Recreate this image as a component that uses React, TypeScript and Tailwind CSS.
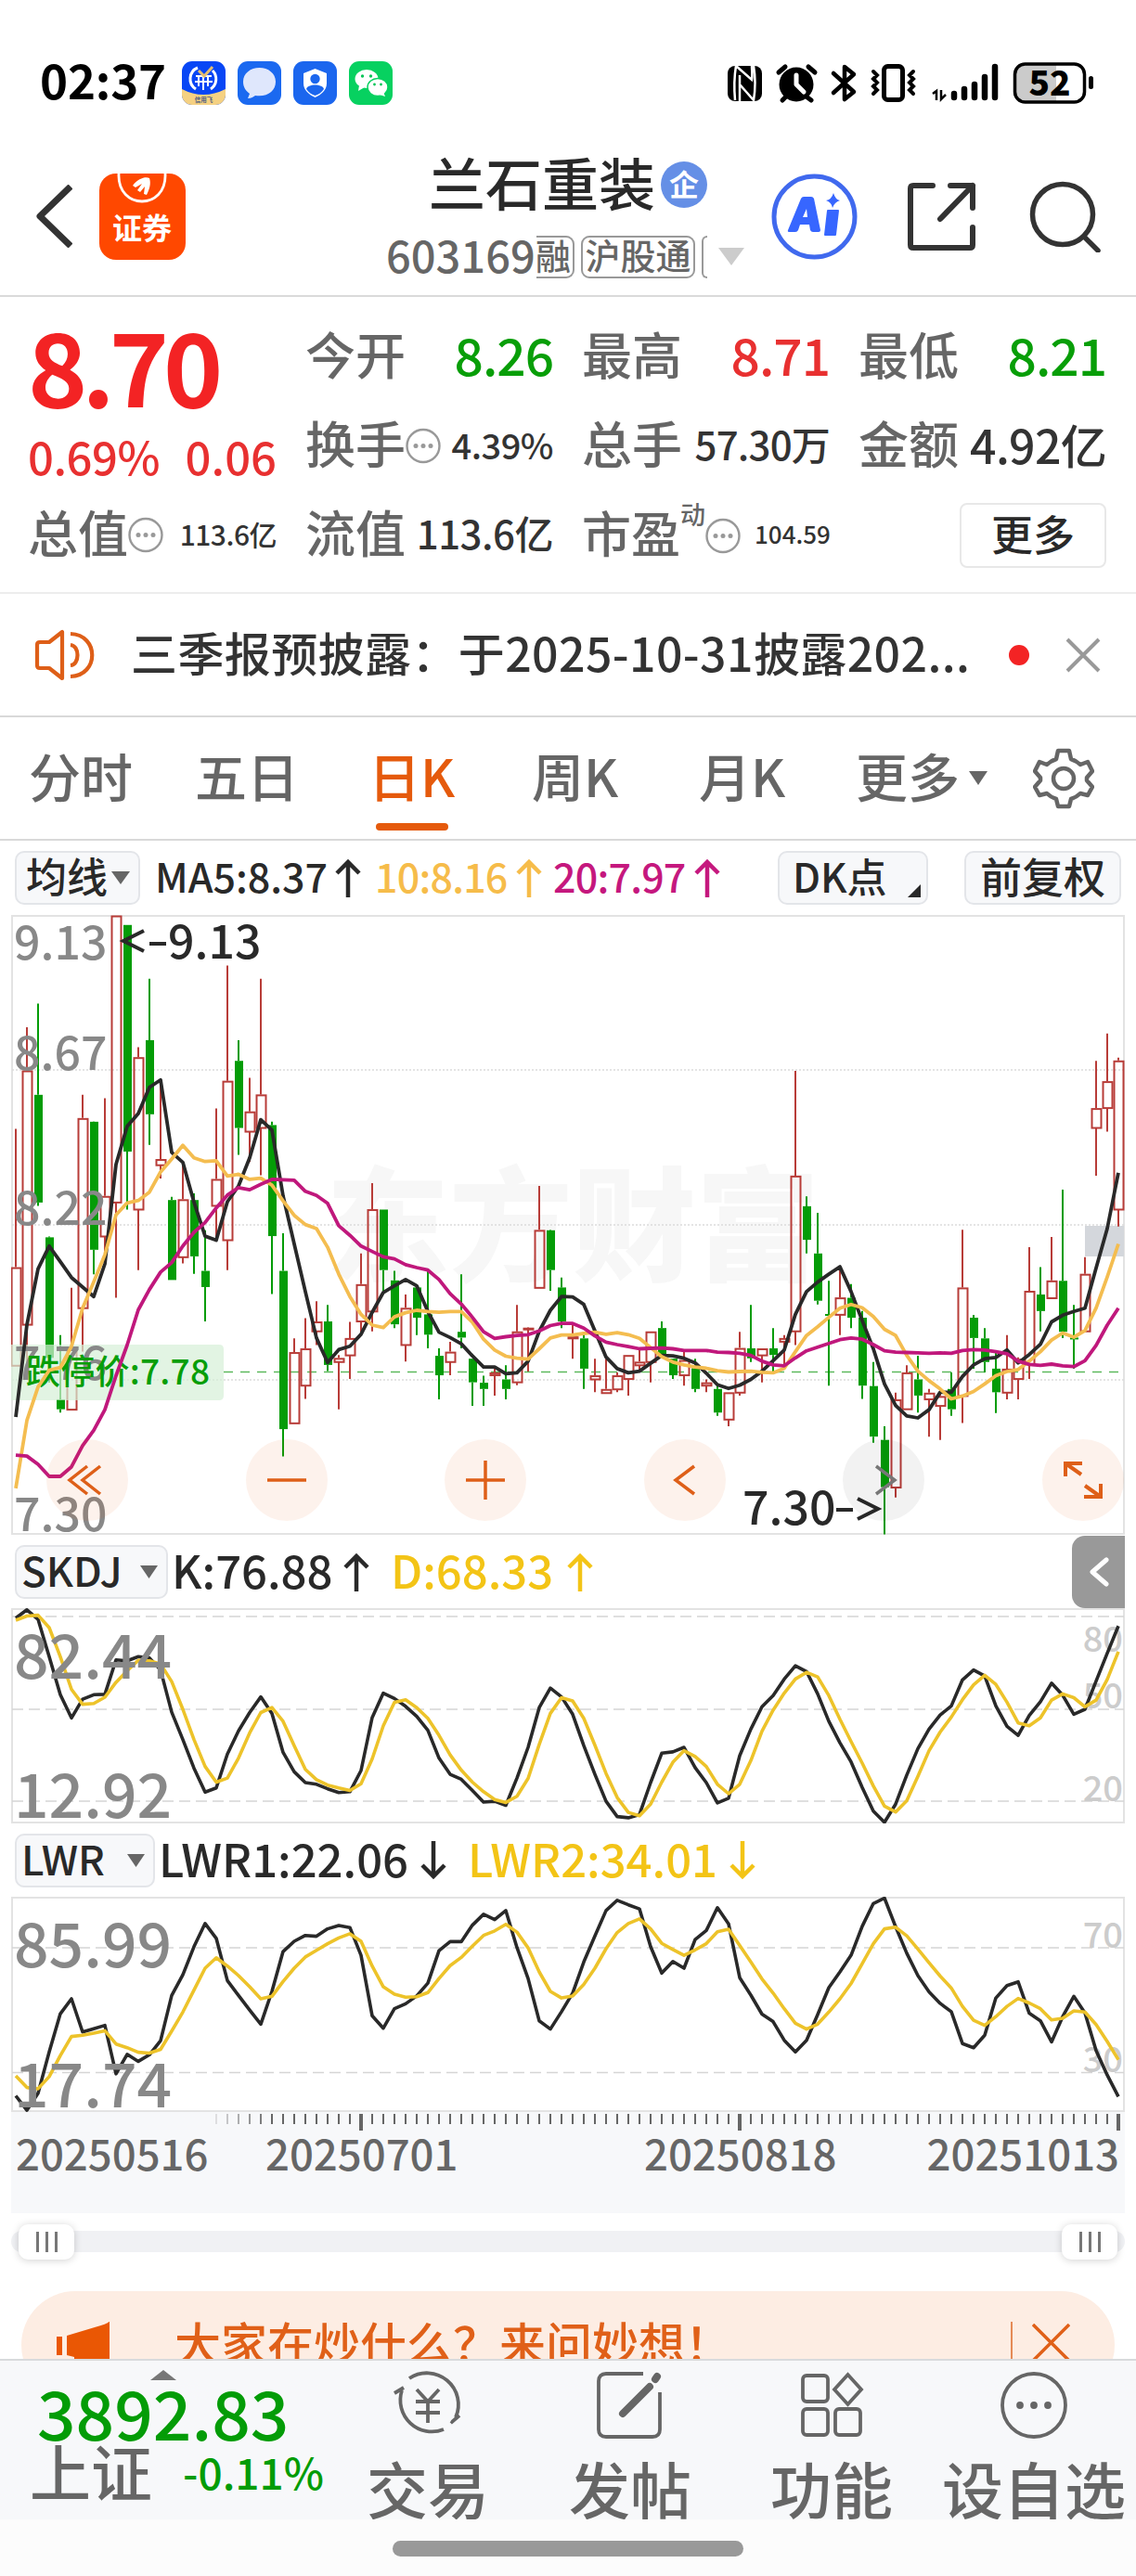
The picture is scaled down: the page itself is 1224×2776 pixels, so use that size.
import React, { Fragment } from "react";

// [up(1)/down(0), high, body top, body bottom, low] in chart units, 2.24 units per pixel
const candles = [
  [1, 552, 886, 1124, 1124], [1, 307, 411, 1025, 1118], [0, 250, 470, 730, 738], [0, 812, 814, 1105, 1165],
  [0, 1050, 1205, 1229, 1237], [1, 936, 1080, 1230, 1230], [1, 470, 526, 985, 1090], [0, 534, 535, 844, 903],
  [1, 478, 714, 812, 880], [1, 37, 37, 730, 960], [0, 60, 60, 607, 747], [1, 355, 379, 747, 893],
  [0, 190, 338, 517, 591], [1, 437, 625, 640, 672], [0, 716, 724, 917, 917], [1, 632, 722, 862, 877],
  [0, 708, 724, 860, 902], [0, 797, 895, 934, 1017], [1, 503, 673, 738, 820], [1, 158, 436, 821, 893],
  [0, 338, 388, 550, 615], [1, 429, 510, 559, 632], [1, 190, 469, 550, 664], [0, 535, 543, 811, 951],
  [0, 804, 895, 1277, 1343], [1, 1058, 1091, 1263, 1263], [1, 1009, 1082, 1172, 1204], [1, 968, 1017, 1041, 1074],
  [0, 977, 1017, 1122, 1137], [1, 1098, 1105, 1115, 1229], [1, 1018, 1057, 1099, 1156], [1, 853, 927, 1017, 1050],
  [1, 683, 746, 993, 1041], [0, 747, 747, 893, 943], [0, 895, 918, 1024, 1033], [1, 952, 984, 1074, 1114],
  [0, 935, 935, 1008, 1050], [0, 894, 1000, 1049, 1082], [0, 1082, 1100, 1147, 1205], [1, 1066, 1090, 1115, 1147],
  [0, 903, 1042, 1056, 1082], [0, 1107, 1107, 1164, 1221], [0, 1148, 1165, 1180, 1221], [1, 1130, 1140, 1147, 1196],
  [0, 1123, 1157, 1180, 1205], [1, 977, 1041, 1164, 1171], [1, 1031, 1032, 1034, 1138], [1, 690, 796, 936, 936],
  [0, 796, 797, 893, 943], [0, 911, 935, 1017, 1033], [1, 1023, 1053, 1058, 1107], [0, 1050, 1058, 1131, 1180],
  [1, 1107, 1147, 1157, 1188], [1, 1107, 1180, 1190, 1190], [1, 1140, 1147, 1181, 1188], [1, 1098, 1098, 1156, 1196],
  [1, 1085, 1114, 1123, 1135], [1, 1041, 1041, 1115, 1164], [0, 1017, 1033, 1100, 1100], [0, 1107, 1107, 1147, 1156],
  [1, 1090, 1110, 1147, 1172], [0, 1107, 1130, 1180, 1188], [1, 1157, 1164, 1172, 1188], [0, 1172, 1180, 1237, 1245],
  [1, 1188, 1188, 1254, 1270], [1, 1042, 1081, 1189, 1196], [0, 977, 1082, 1106, 1115], [1, 1082, 1082, 1099, 1164],
  [0, 1033, 1082, 1098, 1140], [1, 1050, 1057, 1066, 1130], [1, 412, 665, 1041, 1074], [0, 715, 739, 820, 853],
  [0, 755, 853, 967, 976], [0, 919, 999, 1001, 1172], [1, 886, 959, 1001, 1050], [0, 927, 960, 1008, 1033],
  [0, 992, 1008, 1172, 1204], [0, 1115, 1173, 1295, 1310], [0, 1270, 1303, 1417, 1531], [1, 1189, 1205, 1418, 1442],
  [1, 1123, 1140, 1229, 1229], [0, 1100, 1157, 1196, 1237], [1, 1180, 1189, 1205, 1295], [1, 1180, 1197, 1221, 1303],
  [0, 1140, 1180, 1229, 1245], [1, 796, 935, 1197, 1262], [0, 1001, 1008, 1057, 1131], [0, 1033, 1058, 1115, 1140],
  [0, 1090, 1131, 1188, 1238], [1, 1050, 1131, 1189, 1205], [1, 1104, 1107, 1156, 1205], [1, 838, 943, 1120, 1156],
  [0, 886, 952, 992, 1041], [1, 813, 918, 961, 961], [0, 699, 919, 1042, 1057], [0, 977, 1056, 1060, 1131],
  [1, 862, 902, 1041, 1041], [1, 388, 502, 550, 665], [1, 322, 437, 502, 559], [1, 380, 387, 747, 788],
];

const ma5 = [
  1248, 1025, 890, 835, 873, 911, 934, 957, 878, 638, 546, 515, 452, 434, 609, 633, 729, 811, 821, 728, 690, 622, 530, 555, 714,
  830, 945, 1057, 1116, 1085, 1077, 1048, 995, 947, 931, 916, 931, 993, 1043, 1056, 1071, 1100, 1127, 1127, 1143, 1141, 1113,
  1041, 990, 957, 958, 976, 1040, 1103, 1131, 1141, 1137, 1118, 1099, 1100, 1106, 1117, 1142, 1170, 1179, 1171, 1157, 1137,
  1112, 1086, 1000, 945, 922, 903, 885, 945, 1015, 1083, 1168, 1220, 1245, 1250, 1230, 1188, 1188, 1150, 1122, 1107, 1104,
  1086, 1117, 1097, 1072, 1018, 1002, 993, 985, 888, 793, 658,
];
const ma10 = [
  1420, 1256, 1175, 1135, 1128, 1077, 985, 922, 856, 760, 731, 725, 705, 656, 625, 592, 622, 631, 629, 666, 662, 674, 671, 688,
  726, 761, 783, 793, 838, 903, 957, 1000, 1026, 1032, 1006, 996, 990, 993, 995, 993, 993, 1019, 1060, 1086, 1101, 1106, 1108,
  1083, 1057, 1050, 1050, 1046, 1043, 1048, 1044, 1049, 1058, 1080, 1102, 1115, 1122, 1127, 1130, 1136, 1139, 1138, 1137, 1140,
  1141, 1130, 1090, 1051, 1030, 1007, 985, 976, 984, 1005, 1036, 1051, 1099, 1137, 1160, 1180, 1204, 1197, 1186, 1168, 1148,
  1138, 1133, 1113, 1090, 1062, 1045, 1055, 1039, 985, 910, 830,
];
const ma20 = [
  1340, 1342, 1362, 1391, 1391, 1368, 1317, 1280, 1230, 1148, 1074, 989, 940, 898, 875, 835, 802, 778, 743, 712, 694, 699, 686,
  674, 675, 676, 703, 713, 732, 786, 809, 835, 848, 861, 866, 880, 887, 893, 916, 950, 975, 1007, 1042, 1058, 1054, 1051, 1049,
  1040, 1027, 1022, 1022, 1033, 1052, 1067, 1073, 1078, 1083, 1082, 1081, 1083, 1087, 1087, 1087, 1091, 1092, 1094, 1099, 1113,
  1122, 1124, 1105, 1088, 1079, 1070, 1061, 1057, 1060, 1073, 1088, 1091, 1092, 1093, 1094, 1093, 1094, 1087, 1085, 1086, 1090,
  1095, 1113, 1121, 1123, 1120, 1124, 1126, 1112, 1075, 1026, 985,
];
const skdjK = [
  210, 190, 213, 303, 395, 451, 406, 395, 394, 311, 313, 303, 306, 335, 437, 503, 572, 630, 620, 538, 482, 438, 400, 440, 534,
  581, 607, 611, 622, 631, 629, 578, 450, 391, 404, 423, 447, 481, 548, 587, 599, 626, 654, 652, 662, 596, 522, 426, 379, 400,
  442, 518, 587, 652, 689, 692, 684, 607, 536, 533, 522, 571, 607, 656, 645, 542, 478, 424, 397, 357, 325, 339, 393, 459, 511,
  557, 619, 676, 703, 659, 589, 525, 478, 444, 422, 359, 335, 350, 422, 471, 493, 445, 412, 367, 396, 442, 430, 362, 295, 229,
];
const skdjD = [
  215, 205, 203, 233, 303, 382, 418, 416, 401, 365, 337, 312, 313, 321, 363, 430, 503, 568, 606, 596, 548, 487, 438, 426, 459,
  518, 575, 600, 613, 620, 626, 610, 550, 470, 413, 407, 426, 452, 493, 540, 577, 606, 629, 648, 655, 640, 597, 515, 440, 402,
  410, 452, 517, 585, 643, 679, 687, 659, 606, 558, 530, 544, 568, 611, 634, 611, 554, 483, 432, 391, 357, 341, 352, 397, 454,
  508, 560, 615, 664, 678, 651, 592, 530, 485, 449, 407, 371, 348, 370, 413, 463, 470, 451, 408, 393, 402, 424, 408, 358, 291,
];
const lwr1 = [
  1363, 1398, 1357, 1257, 1165, 1129, 1209, 1201, 1193, 1310, 1263, 1280, 1264, 1230, 1121, 1071, 1003, 947, 983, 1085, 1121,
  1156, 1190, 1111, 1015, 990, 976, 978, 960, 952, 957, 1024, 1170, 1200, 1153, 1141, 1122, 1091, 1013, 991, 991, 951, 925, 938,
  916, 1005, 1080, 1182, 1202, 1160, 1115, 1040, 977, 916, 891, 902, 912, 1003, 1067, 1039, 1055, 986, 964, 909, 948, 1078,
  1120, 1166, 1184, 1229, 1257, 1229, 1167, 1102, 1064, 1024, 954, 899, 886, 955, 1019, 1073, 1112, 1140, 1160, 1237, 1247,
  1217, 1127, 1097, 1088, 1164, 1182, 1233, 1172, 1123, 1163, 1254, 1313, 1365,
];
const lwr2 = [
  1315, 1343, 1346, 1317, 1266, 1220, 1217, 1212, 1206, 1238, 1247, 1258, 1260, 1251, 1207, 1161, 1108, 1055, 1030, 1050, 1073,
  1100, 1129, 1123, 1087, 1055, 1028, 1012, 996, 982, 972, 990, 1050, 1100, 1118, 1125, 1124, 1114, 1080, 1049, 1029, 1002, 976,
  965, 949, 968, 1006, 1064, 1111, 1127, 1122, 1094, 1055, 1008, 969, 947, 936, 960, 995, 1010, 1024, 1011, 996, 967, 961, 1000,
  1040, 1081, 1115, 1153, 1188, 1202, 1190, 1161, 1129, 1092, 1044, 996, 960, 956, 977, 1009, 1042, 1074, 1103, 1147, 1181,
  1193, 1172, 1147, 1128, 1139, 1153, 1180, 1176, 1158, 1161, 1191, 1232, 1276,
];

const UNIT = 2.24;
const xAt = (i: number) => 5 + i * 12;
const line = (values: number[], offset: number) =>
  values.map((v, i) => `${xAt(i)},${(v / UNIT - offset).toFixed(1)}`).join(" ");

type TxtProps = { className?: string; children: React.ReactNode };

// pb lifts the glyphs to the optical centre of the line
const Txt = ({ className = "", children }: TxtProps) => (
  <span className={`block whitespace-nowrap leading-none pb-[0.13em] ${className}`}>{children}</span>
);

const Arrow = ({ className = "", down = false }: { className?: string; down?: boolean }) => (
  <svg className={className} width="28" height="42" viewBox="0 0 28 42" fill="none" stroke="currentColor" strokeWidth="4.500">
    {down ? <path d="M14 0V38M2 26L14 38L26 26" /> : <path d="M14 42V4M2 16L14 4L26 16" />}
  </svg>
);

const Triangle = ({ className = "" }: { className?: string }) => (
  <svg className={className} viewBox="0 0 20 15" preserveAspectRatio="none" fill="currentColor">
    <path d="M0 0H20L10 15Z" />
  </svg>
);

const Dots = ({ className = "" }: { className?: string }) => (
  <svg className={`shrink-0 ${className}`} width="38" height="39" viewBox="0 0 38 39" fill="#999">
    <circle cx="19" cy="19.5" r="17.5" fill="none" stroke="#999" strokeWidth="2.4" />
    <circle cx="11" cy="19.5" r="2.5" />
    <circle cx="19" cy="19.5" r="2.5" />
    <circle cx="27" cy="19.5" r="2.5" />
  </svg>
);

const StatusBar = () => (
  <div className="flex h-[136px] items-center pl-[43px] pr-[46px] pt-[42px] text-black">
    <Txt className="w-[153px] text-[51px] font-bold tracking-[-0.2px]">02:37</Txt>
    <div className="flex gap-[13px]">
      <svg width="47" height="47" viewBox="0 0 47 47">
        <clipPath id="app"><rect width="47" height="47" rx="11" /></clipPath>
        <g clipPath="url(#app)">
          <rect width="47" height="47" fill="#0846f5" />
          <path d="M0 30Q23 42 47 30V47H0Z" fill="#f5d182" />
          <path d="M15 30A13 13 0 0 1 17 7M31 30A13 13 0 0 0 33 10" fill="none" stroke="#fff" strokeWidth="3" />
          <path d="M15 16H32M14 22H33M23 14V31M18 17V27M28 17V27" stroke="#fff" strokeWidth="2" />
          <path d="M18 10L24 16L33 6" fill="none" stroke="#e3bd72" strokeWidth="3" />
        </g>
        <text x="23.5" y="44" fontSize="6.5" fontWeight="700" textAnchor="middle" fill="#4f5d80">信用飞</text>
      </svg>
      <svg width="47" height="47" viewBox="0 0 47 47">
        <rect width="47" height="47" rx="11" fill="#1b69f0" />
        <path d="M23.500 7C14 7 6 13 6 22C6 28 9 32 13 35L11 40C15 40 17 38 19 37C32 39 41 32 41 22C41 13 33 7 23.500 7Z" fill="#dfe7fc" />
      </svg>
      <svg width="47" height="47" viewBox="0 0 47 47">
        <rect width="47" height="47" rx="11" fill="#1b66ee" />
        <path d="M23.500 8L36 13V24C36 31 30 36 23.500 39C17 36 11 31 11 24V13Z" fill="#fff" />
        <circle cx="23.500" cy="19" r="5.200" fill="#1b66ee" />
        <path d="M14 30C15 24 32 24 33 30C30 34 27 36 23.500 37C20 36 17 34 14 30Z" fill="#1b66ee" />
      </svg>
      <svg width="47" height="47" viewBox="0 0 47 47">
        <rect width="47" height="47" rx="11" fill="#07d160" />
        <ellipse cx="19" cy="19" rx="12.500" ry="10" fill="#fff" />
        <path d="M11 26L10 32L17 28Z" fill="#fff" />
        <ellipse cx="31" cy="28" rx="11" ry="9.500" fill="#fff" stroke="#07d160" strokeWidth="1.500" />
        <path d="M33 36L39 38L37 33Z" fill="#fff" />
        <g fill="#07c558">
          <circle cx="14.500" cy="16" r="1.700" /><circle cx="23.500" cy="16" r="1.700" />
          <circle cx="27.500" cy="25" r="1.400" /><circle cx="34.500" cy="25" r="1.400" />
        </g>
      </svg>
    </div>
    <svg className="ml-auto" width="394" height="45" viewBox="0 0 394 45">
      <rect x="0" y="4" width="37" height="38" rx="8" />
      <path d="M8 41C7 30 7 16 9 4L26 19C27 14 26 9 26 4M13 14V42M13 24L28 41C30 29 30 16 28 4" fill="none" stroke="#fff" strokeWidth="2.500" />
      <circle cx="74" cy="24" r="18.500" />
      <path d="M62 38L59 41M86 38L90 41M55 11L62 5M87 5L94 11" stroke="#000" strokeWidth="5" strokeLinecap="round" />
      <path d="M74 14V24L82 32" fill="none" stroke="#fff" strokeWidth="5" strokeLinecap="round" strokeLinejoin="round" />
      <path d="M114 12L136 32L126 40V5L136 13L114 33" fill="none" stroke="#000" strokeWidth="4.500" strokeLinecap="round" strokeLinejoin="round" />
      <rect x="168.500" y="4.500" width="20" height="36" rx="4" fill="none" stroke="#000" strokeWidth="5" />
      <path d="M157 10L161 14L157 18L161 22L157 26L161 30L157 34M200 10L196 14L200 18L196 22L200 26L196 30L200 34" fill="none" stroke="#000" strokeWidth="4" strokeLinecap="round" />
      <path d="M221 34L225 31V41M230 30V40L235 35" fill="none" stroke="#000" strokeWidth="2.500" />
      <path d="M244 34V38M255 29V38M266 24V38M277 16V38M288 5V38" stroke="#000" strokeWidth="6.500" strokeLinecap="round" />
      <path d="M319 3H354V42H319Q310 42 310 32V13Q310 3 319 3Z" fill="#cbcbcb" />
      <rect x="309.500" y="2" width="75" height="41" rx="11" fill="none" stroke="#000" strokeWidth="3.500" />
      <rect x="389" y="15" width="5" height="14" rx="2.500" />
      <text x="347" y="36" fontSize="37" fontWeight="900" textAnchor="middle">52</text>
    </svg>
  </div>
);

const Header = () => (
  <div className="flex h-[184px] items-center border-b-2 border-[#dadada] pl-[38px] pt-[12px]">
    <svg width="40" height="68" viewBox="0 0 40 68" fill="none" stroke="#333" strokeWidth="7" strokeLinejoin="round">
      <path d="M38 2L5 34L38 66" />
    </svg>
    <svg className="ml-[29px]" width="93" height="93" viewBox="0 0 93 93">
      <rect width="93" height="93" rx="18" fill="#ff4800" />
      <path d="M21 0C19 40 73 40 71 0" fill="none" stroke="#fff" strokeWidth="2.800" />
      <path d="M36 13C42 5 50 3 54 5C56 11 54 17 51 23L48 22L49 14L44 20L41 18L46 11L39 15Z" fill="#fff" />
      <text x="46" y="71" fontSize="32" fontWeight="700" textAnchor="middle" fill="#fff">证券</text>
    </svg>
    <div className="ml-[216px] h-[136px] w-[400px] shrink-0">
      <div className="flex items-center pl-[46px]">
        <Txt className="text-[61px] text-[#292929]">兰石重装</Txt>
        <div className="ml-[6px] flex h-[50px] w-[50px] items-center justify-center rounded-full bg-[#658fe6]">
          <Txt className="text-[32px] font-bold text-white">企</Txt>
        </div>
      </div>
      <div className="mt-[19px] flex h-[48px] items-center text-[#666]">
        <Txt className="w-[162px] text-[47px] text-[#666]">603169</Txt>
        <div className="flex h-[46px] w-[41px] items-center justify-end rounded-r-[9px] border-2 border-l-0 border-[#999]">
          <Txt className="text-[38px] mr-[2px]">融</Txt>
        </div>
        <div className="ml-[7px] flex h-[46px] w-[123px] items-center justify-center rounded-[9px] border-2 border-[#999]">
          <Txt className="text-[38px]">沪股通</Txt>
        </div>
        <div className="ml-[7px] h-[46px] w-[6px] rounded-l-[9px] border-2 border-r-0 border-[#999]" />
        <Triangle className="ml-[12px] h-[19px] w-[28px] text-[#ccc]" />
      </div>
    </div>
    <svg className="ml-[15px]" width="93" height="93" viewBox="0 0 93 93">
      <circle cx="46.500" cy="46.500" r="43.500" fill="none" stroke="#4069ee" strokeWidth="5" />
      <path d="M18 61L32 27Q33 25 35 25H43Q45 25 46 27L53 61Q53 63 51 63H45Q43 63 42 61L41 55H31L29 61Q28 63 26 63H20Q17 63 18 61ZM34 47H39L38 38Z" fill="#3766ff" />
      <path d="M61 40H72L69 66H58Z" fill="#3766ff" stroke="#3766ff" strokeWidth="2" strokeLinejoin="round" />
      <path d="M67 21Q69 28 74 29Q68 31 66 37Q65 31 59 29Q65 28 67 21Z" fill="#3766ff" />
    </svg>
    <svg className="ml-[53px]" width="75" height="75" viewBox="0 0 75 75" fill="none" stroke="#333" strokeWidth="6" strokeLinecap="round" strokeLinejoin="round">
      <path d="M28 4H7Q4 4 4 7V68Q4 71 7 71H68Q71 71 71 68V49M47 4H71V28M71 4L36 40" />
    </svg>
    <svg className="ml-[55px]" width="80" height="77" viewBox="0 0 80 77" fill="none" stroke="#333" strokeWidth="5.500" strokeLinecap="round">
      <circle cx="38" cy="36" r="32.500" />
      <path d="M61 60L76 75" />
    </svg>
  </div>
);

type CellProps = { label: string; value: string; size: string; color?: string; dots?: boolean };

const Cell = ({ label, value, size, color = "text-[#333]", dots }: CellProps) => (
  <div className="flex h-[96px] items-center justify-between">
    <div className="flex items-center">
      <Txt className="text-[54px] text-[#666]">{label}</Txt>
      {dots && <Dots />}
    </div>
    <Txt className={`${size} ${color}`}>{value}</Txt>
  </div>
);

const Quote = () => (
  <div className="h-[320px] border-b-2 border-[#ededed] px-[30px] pt-[17px]">
    <div className="grid grid-cols-[268px_267px_267px_267px] grid-rows-[96px_96px_96px] gap-x-[31px]">
      <div className="row-span-2 flex flex-col">
        <Txt className="text-[109px] font-bold tracking-[-6px] text-[#f32324]">8.70</Txt>
        <div className="mt-[6px] flex justify-between text-[#e83030]">
          <Txt className="text-[49px] tracking-[-0.5px]">0.69%</Txt>
          <Txt className="text-[49px]">0.06</Txt>
        </div>
      </div>
      <Cell label="今开" value="8.26" size="text-[55px] tracking-[-1px]" color="text-[#089e08]" />
      <Cell label="最高" value="8.71" size="text-[55px] tracking-[-1px]" color="text-[#e83030]" />
      <Cell label="最低" value="8.21" size="text-[55px] tracking-[-1px]" color="text-[#089e08]" />
      <Cell label="换手" value="4.39%" size="text-[38px] tracking-[-0.5px]" dots />
      <Cell label="总手" value="57.30万" size="text-[42px] tracking-[-0.8px]" />
      <Cell label="金额" value="4.92亿" size="text-[50px] tracking-[-0.7px]" />
      <Cell label="总值" value="113.6亿" size="text-[30px] tracking-[-0.5px]" dots />
      <Cell label="流值" value="113.6亿" size="text-[42px] tracking-[-0.5px]" />
      <div className="flex h-[96px] items-center">
        <Txt className="text-[53px] text-[#666]">市盈</Txt>
        <Txt className="mb-[44px] text-[27px] text-[#666]">动</Txt>
        <Dots />
        <Txt className="ml-[15px] text-[26px] text-[#333]">104.59</Txt>
      </div>
      <div className="flex h-[96px] items-center justify-end">
        <div className="flex h-[70px] w-[158px] items-center justify-center rounded-[8px] border-2 border-[#e8e8e8]">
          <Txt className="text-[45px] text-[#292929]">更多</Txt>
        </div>
      </div>
    </div>
  </div>
);

const Notice = () => (
  <div className="flex h-[133px] items-center border-b-2 border-[#d9d9d9] pl-[37px]">
    <svg width="66" height="56" viewBox="0 0 66 56" fill="none" stroke="#de5f18" strokeWidth="4.200" strokeLinejoin="round">
      <path d="M30 3V53L16 42H6Q3 42 3 39V17Q3 14 6 14H16Z" />
      <path d="M39 17C49 18 49 38 39 39M39 5C70 6 70 50 39 51" />
    </svg>
    <Txt className="ml-[38px] w-[903px] text-[50px] tracking-[0.4px] text-[#333]">三季报预披露：于2025-10-31披露202...</Txt>
    <div className="ml-[43px] h-[22px] w-[22px] shrink-0 rounded-full bg-[#f32324]" />
    <svg className="ml-[39px]" width="38" height="38" viewBox="0 0 38 38" stroke="#999" strokeWidth="4">
      <path d="M2 2L36 36M36 2L2 36" />
    </svg>
  </div>
);

const Tabs = () => (
  <div className="flex h-[133px] items-center border-b-2 border-[#d9d9d9] pl-[31px] text-[56px] text-[#666]">
    <Txt className="w-[179px]">分时</Txt>
    <Txt className="w-[187px]">五日</Txt>
    <div className="relative w-[176px]">
      <Txt className="text-[#e55a0c]">日K</Txt>
      <div className="absolute left-[8px] top-[80px] h-[8px] w-[78px] rounded-full bg-[#e55a0c]" />
    </div>
    <Txt className="w-[180px]">周K</Txt>
    <Txt className="w-[169px]">月K</Txt>
    <Txt>更多</Txt>
    <Triangle className="ml-[10px] h-[15px] w-[20px]" />
    <svg className="ml-[49px]" width="66" height="66" viewBox="0 0 66 66" fill="none" stroke="#666" strokeWidth="4.500" strokeLinejoin="round">
      <path d="M27 3H39L41 12Q47 14 51 18L59 15L64 25L58 32V35L64 42L59 51L51 49Q47 53 41 55L39 63H27L25 55Q19 53 15 49L7 51L2 42L8 35V32L2 25L7 15L15 18Q19 14 25 12Z" />
      <circle cx="33" cy="33" r="11" />
    </svg>
  </div>
);

const pill = "flex items-center rounded-[10px] border-2 border-[#e3e5e9] bg-[#f7f8fa] text-[#292929]";

const MaRow = () => (
  <div className="flex h-[80px] items-center pl-[16px] pr-[16px]">
    <div className={`${pill} h-[58px] w-[135px] pl-[10px]`}>
      <Txt className="text-[44px]">均线</Txt>
      <Triangle className="ml-[4px] h-[14px] w-[20px] text-[#666]" />
    </div>
    <Txt className="ml-[16px] w-[194px] text-[43px] text-[#292929]">MA5:8.37</Txt>
    <Arrow className="w-[28px] text-[#292929]" />
    <Txt className="ml-[15px] w-[152px] text-[43px] tracking-[-0.8px] text-[#f6bc4a]">10:8.16</Txt>
    <Arrow className="w-[28px] text-[#f6bc4a]" />
    <Txt className="ml-[12px] w-[152px] text-[43px] tracking-[-0.8px] text-[#c5187e]">20:7.97</Txt>
    <Arrow className="w-[28px] text-[#c5187e]" />
    <div className={`${pill} relative ml-auto h-[58px] w-[162px] pl-[14px]`}>
      <Txt className="text-[43px]">DK点</Txt>
      <svg className="absolute bottom-[6px] right-[6px]" width="14" height="14" viewBox="0 0 14 14" fill="#292929">
        <path d="M14 0V14H0Z" />
      </svg>
    </div>
    <div className={`${pill} ml-[39px] h-[58px] w-[169px] justify-center`}>
      <Txt className="text-[45px]">前复权</Txt>
    </div>
  </div>
);

const roundButtons = [
  "M22 3L3 18L22 33M36 3L17 18L36 33",
  "M1 18H43",
  "M1 18H43M22 -3V39",
  "M32 3L12 18L32 33",
  "M14 3L34 18L14 33",
  "",
];

const MainChart = () => (
  <div className="relative mx-3 h-[668px]">
    <svg width="1200" height="668" viewBox="0 0 1200 668">
      <text x="339" y="384" fontSize="133" fontWeight="900" fill="#f7f7f7">东方财富</text>
      <rect x="1" y="1" width="1198" height="666" fill="none" stroke="#e3e3e3" strokeWidth="2" />
      {[167, 334, 501].map((y) => (
        <path key={y} d={`M1 ${y}H1199`} stroke="#dcdcdc" strokeWidth="1.500" strokeDasharray="2 2" />
      ))}
      <rect x="1157" y="335" width="42" height="33" fill="#d4d7dc" />
      <path d="M229 492.500H1199" stroke="#5cb95c" strokeWidth="1.500" strokeDasharray="10 8" />
      {candles.map(([up, high, top, bottom, low], i) => {
        const x = xAt(i);
        const y = (v: number) => v / UNIT - 16;
        const color = up ? "#b83c38" : "#049c07";
        return (
          <g key={i} stroke={color}>
            <path d={`M${x} ${y(high)}V${y(top)}M${x} ${y(bottom)}V${y(low)}`} strokeWidth="2" />
            {up ? (
              <rect x={x - 4.5} y={y(top) + 1} width="10" height={Math.max(y(bottom) - y(top) - 1, 1)} fill="none" strokeWidth="2" />
            ) : (
              <rect x={x - 4} y={y(top)} width="9" height={Math.max(y(bottom) - y(top), 2)} fill={color} stroke="none" />
            )}
          </g>
        );
      })}
      <path d="M0 463H224Q229 463 229 468V518Q229 523 224 523H0Z" fill="#d5f0d7" fillOpacity="0.7" />
      <g fontSize="50" fill="#888">
        <text x="3" y="48">9.13</text>
        <text x="3" y="167">8.67</text>
        <text x="3" y="334">8.22</text>
        <text x="3" y="501">7.76</text>
        <text x="3" y="664">7.30</text>
      </g>
      <text x="16" y="506" fontSize="37" fill="#089e08" textLength="198">跌停价:7.78</text>
      <g fill="none" strokeWidth="3.800" strokeLinejoin="round">
        <polyline points={line(ma5, 16)} stroke="#292929" />
        <polyline points={line(ma10, 16)} stroke="#f4bd50" />
        <polyline points={line(ma20, 16)} stroke="#c0187c" />
      </g>
      <path d="M143 17L121 28L143 39M149 31H167" fill="none" stroke="#292929" strokeWidth="4" />
      <text x="169" y="47" fontSize="50" fill="#292929">9.13</text>
      <text x="788" y="657" fontSize="50" fill="#292929">7.30</text>
      <path d="M889 641H907M912 629L934 640L912 651" fill="none" stroke="#292929" strokeWidth="4" />
    </svg>
    <div className="absolute left-[38px] top-[565px] flex w-[1161px] justify-between">
      {roundButtons.map((d, i) => (
        <div
          key={i}
          className={`flex h-[88px] w-[88px] items-center justify-center rounded-full ${i === 4 ? "bg-black/5" : "bg-[#e8550a]/8"}`}
        >
          <svg width="44" height="42" viewBox="0 -3 44 42" fill="none" stroke={i === 4 ? "#777" : "#de5f18"} strokeWidth="3.500">
            {d ? <path d={d} /> : <path d="M3 14V0H21M3 0L20 12M41 22V36H23M41 36L24 24" strokeWidth="4" />}
          </svg>
        </div>
      ))}
    </div>
  </div>
);

type IndicatorRowProps = { name: string; width: string; first: string; second: string; down?: boolean; firstWidth: string; secondWidth: string };

const IndicatorRow = ({ name, width, first, second, down, firstWidth, secondWidth }: IndicatorRowProps) => (
  <div className="flex h-[79px] items-center pl-[16px] pr-3">
    <div className={`${pill} h-[58px] ${width} justify-between pl-[5px] pr-[9px]`}>
      <Txt className="text-[44px]">{name}</Txt>
      <Triangle className="h-[14px] w-[19px] text-[#666]" />
    </div>
    <Txt className={`ml-[4px] text-[49px] text-[#292929] ${firstWidth}`}>{first}</Txt>
    <Arrow className="text-[#292929]" down={down} />
    <Txt className={`ml-[23px] text-[49px] text-[#f3c416] ${secondWidth}`}>{second}</Txt>
    <Arrow className="text-[#f3c416]" down={down} />
    {!down && (
      <div className="ml-auto flex h-[78px] w-[57px] items-center justify-center rounded-l-[14px] bg-[#999]">
        <svg width="22" height="32" viewBox="0 0 22 32" fill="none" stroke="#fff" strokeWidth="5" strokeLinecap="round" strokeLinejoin="round">
          <path d="M19 3L4 16L19 29" />
        </svg>
      </div>
    )}
  </div>
);

type SubChartProps = {
  offset: number;
  black: number[];
  yellow: number[];
  guides: number[];
  left: [string, number][];
  right: [string, number][];
};

const SubChart = ({ offset, black, yellow, guides, left, right }: SubChartProps) => (
  <svg className="mx-3 block" width="1200" height="232" viewBox="0 0 1200 232">
    <rect x="1" y="1" width="1198" height="230" fill="none" stroke="#e3e3e3" strokeWidth="2" />
    {guides.map((y) => (
      <path key={y} d={`M1 ${y}H1199`} stroke="#d5d5d5" strokeWidth="1.500" strokeDasharray="12 6" />
    ))}
    {right.map(([label, y]) => (
      <text key={label} x="1198" y={y} fontSize="38" textAnchor="end" fill="#ccc">{label}</text>
    ))}
    <g fill="none" strokeWidth="3.600" strokeLinejoin="round">
      <polyline points={line(black, offset)} stroke="#292929" />
      <polyline points={line(yellow, offset)} stroke="#edc32a" />
    </g>
    {left.map(([label, y]) => (
      <text key={label} x="3" y={y} fontSize="66" fill="#888">{label}</text>
    ))}
  </svg>
);

const TimeAxis = () => (
  <div className="mx-3 h-[109px] bg-[#f7f8fa]">
    <svg className="block" width="1200" height="70" viewBox="0 0 1200 70">
      {Array.from({ length: 82 }, (_, k) => k + 18).map((i) => {
        const major = i === 31 || i === 65 || i === 99;
        return (
          <path
            key={i}
            d={`M${xAt(i)} 2V${major ? 20 : 13}`}
            stroke="#666"
            strokeWidth={major ? 4 : 2}
            opacity={Math.min(1, (i - 17) / 6)}
          />
        );
      })}
      <g fontSize="45.500" fill="#666">
        <text x="5" y="63">20250516</text>
        <text x="274" y="63">20250701</text>
        <text x="682" y="63">20250818</text>
        <text x="1194" y="63" textAnchor="end">20251013</text>
      </g>
    </svg>
  </div>
);

const Handle = () => (
  <div className="flex h-[38px] w-[60px] items-center justify-center gap-[7px] rounded-[10px] bg-white shadow-[0_1px_8px_rgba(0,0,0,0.18)]">
    <div className="h-[22px] w-[3px] bg-[#777]" />
    <div className="h-[22px] w-[3px] bg-[#777]" />
    <div className="h-[22px] w-[3px] bg-[#777]" />
  </div>
);

const RangeSlider = () => (
  <div className="mx-3 mt-[19px] flex h-[23px] items-center justify-between rounded-full bg-[#f0f1f4] px-[8px]">
    <Handle />
    <Handle />
  </div>
);

const Banner = () => (
  <div className="mt-[42px] h-[73px] overflow-hidden px-[23px]">
    <div className="flex h-[116px] rounded-full bg-[#fdede3] pl-[37px] pt-[33px] text-[#e06018]">
      <svg width="60" height="62" viewBox="0 0 60 62" fill="#ea5704">
        <path d="M1 16H7V36H1ZM12 15L42 6Q58 2 58 -1V62H20V38L12 36Z" />
      </svg>
      <Txt className="-mt-[4px] ml-[68px] h-[60px] w-[901px] text-[50px]">大家在炒什么？来问妙想！</Txt>
      <div className="h-[60px] w-[2px] bg-[#e58a56]" />
      <svg className="ml-[21px] mt-[2px]" width="41" height="41" viewBox="0 0 41 41" stroke="#e06018" strokeWidth="3.500">
        <path d="M1 1L40 40M40 1L1 40" />
      </svg>
    </div>
  </div>
);

const navItems = [
  {
    label: "交易",
    width: "w-[218px]",
    icon: (
      <Fragment>
        <path d="M19 10A34 34 0 0 1 69 52M64 56L65 57L73 50M56 65A34 34 0 0 1 11 23M3 26L13 20" />
        <path d="M27 22L39 35L51 22M26 35H52M26 47H52M39 35V58" />
      </Fragment>
    ),
  },
  {
    label: "发帖",
    width: "w-[218px]",
    icon: (
      <Fragment>
        <path d="M53 5H13Q5 5 5 13V65Q5 73 13 73H63Q71 73 71 65V25" />
        <path d="M66 11L68 8M60 19L31 48" strokeWidth="8" strokeLinecap="round" />
      </Fragment>
    ),
  },
  {
    label: "功能",
    width: "w-[216px]",
    icon: (
      <Fragment>
        <rect x="8" y="7" width="27" height="28" rx="4" />
        <rect x="8" y="43" width="27" height="28" rx="4" />
        <rect x="43" y="43" width="27" height="28" rx="4" />
        <path d="M56.500 6L71 22L56.500 38L42 22Z" />
      </Fragment>
    ),
  },
  {
    label: "设自选",
    width: "w-[220px]",
    icon: (
      <Fragment>
        <circle cx="39" cy="39" r="34" />
        <circle cx="24" cy="39" r="2" />
        <circle cx="39" cy="39" r="2" />
        <circle cx="54" cy="39" r="2" />
      </Fragment>
    ),
  },
];

const BottomBar = () => (
  <div className="flex h-[173px] overflow-hidden border-t-2 border-[#d8dadc] bg-[#f7f8fa]">
    <div className="w-[352px] shrink-0">
      <svg className="ml-[162px] mt-[10px] block" width="28" height="11" viewBox="0 0 28 11" fill="#777">
        <path d="M14 0L28 11H0Z" />
      </svg>
      <Txt className="-mt-[3px] ml-[40px] text-[73px] text-[#049c07]">3892.83</Txt>
      <div className="-mt-[16px] flex items-center">
        <Txt className="ml-[32px] w-[165px] text-[66px] text-[#666]">上证</Txt>
        <Txt className="text-[46px] text-[#049c07]">-0.11%</Txt>
      </div>
    </div>
    {navItems.map((item) => (
      <div key={item.label} className={`flex shrink-0 flex-col items-center pt-[9px] ${item.width}`}>
        <svg className="shrink-0" width="78" height="78" viewBox="0 0 78 78" fill="none" stroke="#666" strokeWidth="3.800">
          {item.icon}
        </svg>
        <Txt className="mt-[16px] text-[66px] text-[#666]">{item.label}</Txt>
      </div>
    ))}
  </div>
);

export default function App() {
  return (
    <div className="h-[2776px] w-[1224px] overflow-hidden bg-white font-['Noto_Sans_CJK_SC',sans-serif] font-medium">
      <StatusBar />
      <Header />
      <Quote />
      <Notice />
      <Tabs />
      <MaRow />
      <MainChart />
      <IndicatorRow name="SKDJ" width="w-[165px]" first="K:76.88" firstWidth="w-[185px]" second="D:68.33" secondWidth="w-[190px]" />
      <SubChart
        offset={83}
        black={skdjK}
        yellow={skdjD}
        guides={[9, 109, 208]}
        left={[["82.44", 75.500], ["12.92", 226]]}
        right={[["80", 47], ["50", 108], ["20", 208]]}
      />
      <IndicatorRow name="LWR" width="w-[151px]" first="LWR1:22.06" firstWidth="w-[282px]" second="LWR2:34.01" secondWidth="w-[282px]" down />
      <SubChart
        offset={394}
        black={lwr1}
        yellow={lwr2}
        guides={[55, 189.500]}
        left={[["85.99", 76], ["17.74", 227]]}
        right={[["70", 55], ["30", 189]]}
      />
      <TimeAxis />
      <RangeSlider />
      <Banner />
      <BottomBar />
      <div className="flex h-[61px] items-center justify-center bg-[#fcfcfc] pt-[2px]">
        <div className="h-[17px] w-[378px] rounded-full bg-[#999]" />
      </div>
    </div>
  );
}
